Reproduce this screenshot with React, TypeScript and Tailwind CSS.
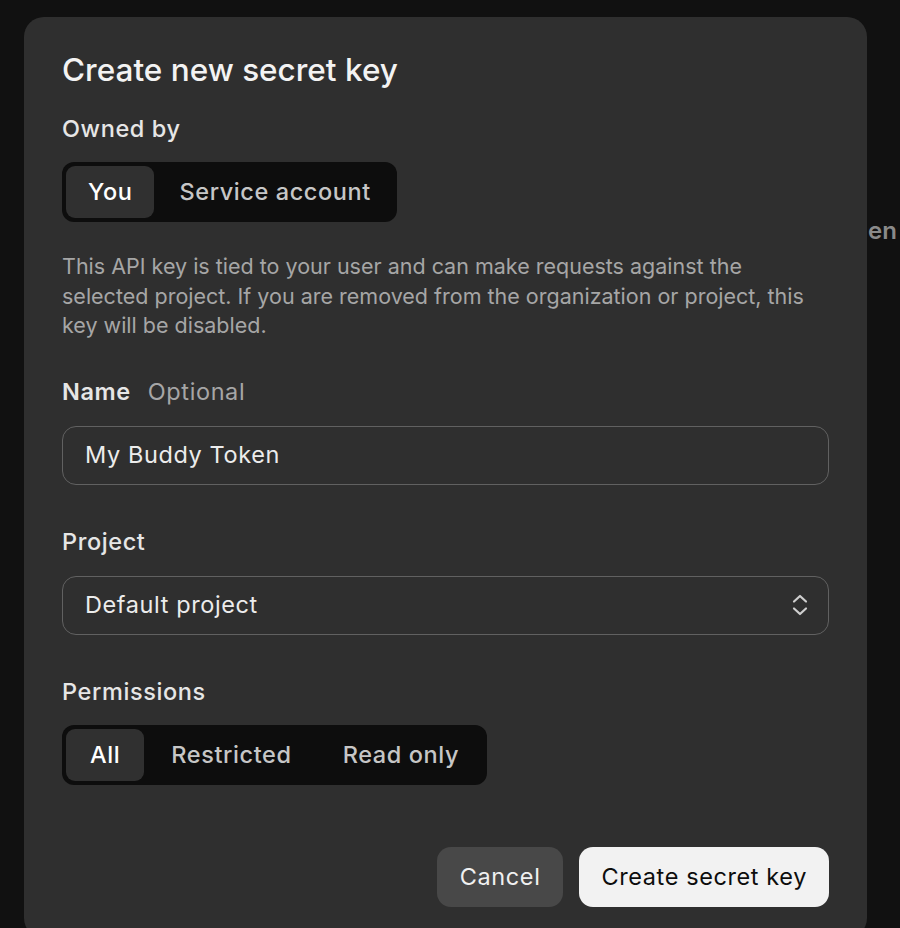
import React from "react";

const font = { fontFamily: "Inter, 'Noto Sans', sans-serif" };

function Segment({ items, active, pad }: { items: string[]; active: number; pad: string }) {
  return (
    <div className="inline-flex items-center gap-[3px] self-start rounded-[12px] bg-[#0d0d0d] p-[4px]">
      {items.map((it, i) => (
        <div
          key={it}
          className={
            (i === active
              ? "flex h-[52px] items-center rounded-[9px] bg-[#303030] text-[23.5px] font-medium tracking-[0.6px] text-white "
              : "flex h-[52px] items-center rounded-[9px] text-[23.5px] font-medium tracking-[0.6px] text-[#c6c6c6] ") + pad
          }
        >
          {it}
        </div>
      ))}
    </div>
  );
}

export default function App() {
  return (
    <div className="h-[928px] w-[900px] overflow-hidden bg-[#111111]" style={font}>
      <div className="flex items-start">
        <div className="ml-[24px] mt-[17px] flex h-[921px] w-[843px] shrink-0 flex-col rounded-[20px] bg-[#2f2f2f] px-[38px] pt-[33px]">
          <h1 className="text-[31.5px] font-medium leading-[40px] text-[#f3f3f3]">Create new secret key</h1>
          <div className="mt-[24px] text-[23.5px] font-medium leading-[30px] tracking-[0.6px] text-[#e6e6e6]">
            Owned by
          </div>
          <div className="mt-[18px] flex">
            <Segment items={["You", "Service account"]} active={0} pad="px-[22px]" />
          </div>
          <p className="mt-[30px] text-[21.5px] leading-[29.5px] text-[#a6a6a6]">
            This API key is tied to your user and can make requests against the selected project. If you are removed
            from the organization or project, this key will be disabled.
          </p>
          <div className="mt-[36px] flex items-center gap-[17px] text-[23.5px] leading-[30px] tracking-[0.6px]">
            <span className="font-semibold text-[#e6e6e6]">Name</span>
            <span className="text-[#a6a6a6]">Optional</span>
          </div>
          <div className="mt-[19px] flex h-[59px] items-center rounded-[14px] border-[1.5px] border-[#616161] px-[22px] text-[23.5px] tracking-[0.6px] text-[#ececec]">
            My Buddy Token
          </div>
          <div className="mt-[42px] text-[23.5px] font-medium leading-[30px] tracking-[0.6px] text-[#e6e6e6]">
            Project
          </div>
          <div className="mt-[19px] flex h-[59px] items-center justify-between rounded-[14px] border-[1.5px] border-[#616161] pl-[22px] pr-[20px] text-[23.5px] tracking-[0.6px] text-[#ececec]">
            <span>Default project</span>
            <svg width="16" height="24" viewBox="0 0 16 24" fill="none" stroke="#cfcfcf" strokeWidth="2.2" strokeLinecap="round" strokeLinejoin="round">
              <path d="M2 8.5 8 3l6 5.5" />
              <path d="M2 15.5 8 21l6-5.5" />
            </svg>
          </div>
          <div className="mt-[42px] text-[23.5px] font-medium leading-[30px] tracking-[0.6px] text-[#e6e6e6]">
            Permissions
          </div>
          <div className="mt-[18px] flex">
            <Segment items={["All", "Restricted", "Read only"]} active={0} pad="px-[24px]" />
          </div>
          <div className="mt-[62px] flex justify-end gap-[16px]">
            <button className="flex h-[60px] items-center rounded-[14px] bg-[#484848] px-[23px] text-[23.5px] tracking-[0.6px] text-[#f0f0f0]">
              Cancel
            </button>
            <button className="flex h-[60px] items-center rounded-[14px] bg-[#f2f2f2] px-[22px] text-[23.5px] tracking-[0.6px] text-[#0d0d0d]">
              Create secret key
            </button>
          </div>
        </div>
        <span className="ml-[1px] mt-[213px] whitespace-nowrap text-[24px] font-semibold text-[#8a8a8a]">en</span>
      </div>
    </div>
  );
}
